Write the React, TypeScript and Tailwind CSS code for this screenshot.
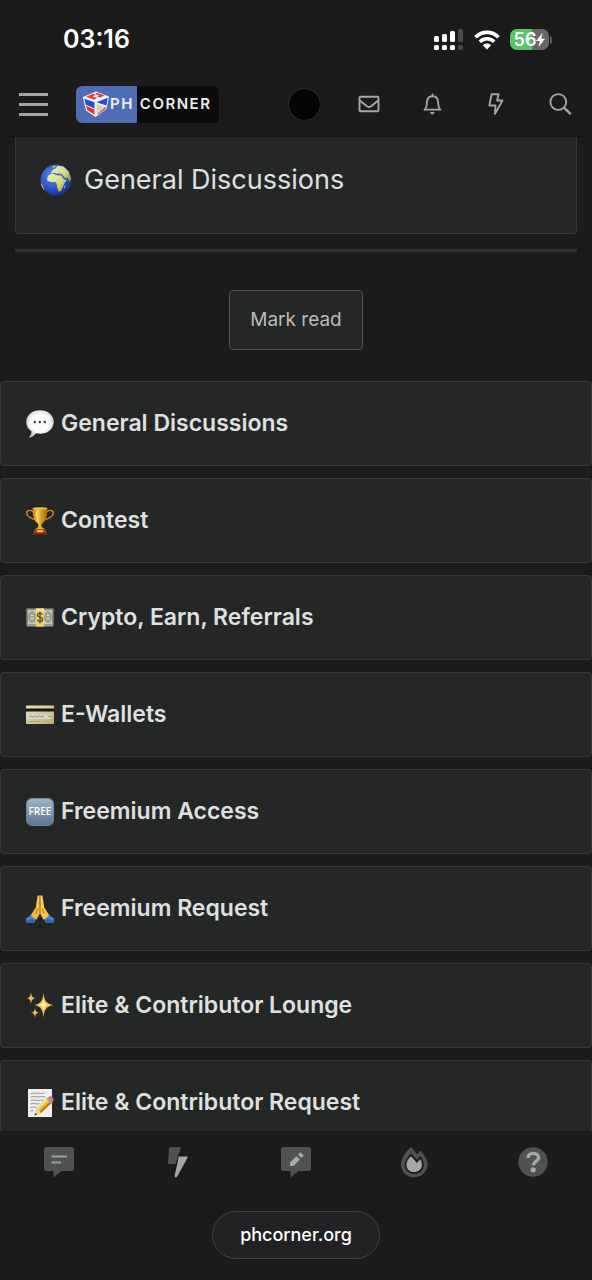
import type { ReactNode } from "react";

interface Entry {
  name: string;
  icon: ReactNode;
}

function GlobeIcon() {
  return (
    <svg viewBox="0 0 32 32" className="size-8" aria-hidden="true">
      <defs>
        <radialGradient id="ocean" cx="0.4" cy="0.35" r="0.65">
          <stop offset="0" stopColor="#5b8fe0" />
          <stop offset="0.6" stopColor="#2f5acb" />
          <stop offset="1" stopColor="#1d3187" />
        </radialGradient>
        <linearGradient id="land" x1="0" y1="0" x2="1" y2="1">
          <stop offset="0" stopColor="#eef2c4" />
          <stop offset="0.6" stopColor="#d3d584" />
          <stop offset="1" stopColor="#8b8a2c" />
        </linearGradient>
        <clipPath id="globe">
          <circle cx="16" cy="16" r="15.5" />
        </clipPath>
      </defs>
      <circle cx="16" cy="16" r="15.5" fill="url(#ocean)" />
      <g clipPath="url(#globe)" fill="url(#land)">
        <path d="M7.500 13c1-2.200 3.500-3.300 6.500-3.400l2 1.500 3 .4 2.500.1 2.300 4 2.800.4-2.500 3.800-1.200 3.200-2 4-2 .8-1.700-3.700-.2-3.700-1.500-2.400-4 .2L7.200 16.500z" />
        <path d="M11 9l1.500-3 3-1.500 2-2.700 6 .8 5 5 2.500 7.400-1.500 3-1.800-4.300-2.200.8-3-3.600-2.500.2-.6-1.800-2.600.8-1.600-1.200-1.600 1z" />
        <path d="M0 18.500l2.200 1.700.8 2.800 1.600 2.200L2 27l-3-5z" fill="#d9cc62" />
        <path d="M12 2.500l3-1 1 1-2.500 1.500z" fill="#a6cf6a" />
        <path d="M24.500 22l1-.8-.3 2.600-.9.6z" />
      </g>
      <path d="M13 9l3 1.200 3 .2 2-.4 1.500 1.300" fill="none" stroke="#37609f" strokeWidth="1" />
    </svg>
  );
}

function SpeechIcon() {
  return (
    <svg viewBox="0 0 28 28" className="size-7" aria-hidden="true">
      <defs>
        <radialGradient id="bubble" cx="0.5" cy="0.45" r="0.55">
          <stop offset="0.6" stopColor="#fcfcfc" />
          <stop offset="1" stopColor="#c3c5c5" />
        </radialGradient>
      </defs>
      <path
        d="M14 .3C6.300.3.300 5 .3 11.900c0 4 2 7.300 5.200 9.300.1 2.200-.9 4.600-2.700 6.500 3-.3 5.600-2.100 7.200-4.400 1.200.3 2.600.4 4 .4 7.700 0 13.700-4.900 13.700-11.800S21.700.3 14 .3z"
        fill="url(#bubble)"
      />
      <circle cx="8.800" cy="12" r="1.200" fill="#3a3a3a" />
      <circle cx="13.800" cy="12" r="1.200" fill="#3a3a3a" />
      <circle cx="18.800" cy="12" r="1.200" fill="#3a3a3a" />
    </svg>
  );
}

function TrophyIcon() {
  return (
    <svg viewBox="0 0 28 28" className="size-7" aria-hidden="true">
      <defs>
        <linearGradient id="gold" x1="0" x2="1" y1="0" y2="0">
          <stop offset="0" stopColor="#c47a10" />
          <stop offset="0.35" stopColor="#f6cf58" />
          <stop offset="0.6" stopColor="#d79a24" />
          <stop offset="1" stopColor="#a5620c" />
        </linearGradient>
      </defs>
      <path
        d="M8 5.500C5.500 2.500.7 2.700.7 6.200c0 3.300 4.300 5.200 9.300 6.800M20 5.500c2.500-3 7.300-2.800 7.300.7 0 3.300-4.300 5.200-9.300 6.800"
        fill="none"
        stroke="#c98f2c"
        strokeWidth="1.400"
      />
      <path d="M6.600 1.100h14.800c.2 7.800-1.600 13.300-5.600 15.700l-.4 4.700h-2.800l-.4-4.700C8.200 14.400 6.400 8.900 6.600 1.100z" fill="url(#gold)" />
      <ellipse cx="14" cy="1.400" rx="7.400" ry="1.200" fill="#eac25a" />
      <path d="M10.500 4.500c0 4 .8 7.500 2.300 9.800" fill="none" stroke="#fbe596" strokeWidth="1" />
      <path d="M9.500 22.300c1-1.700 2.500-2.200 4.500-2.200s3.500.5 4.500 2.200z" fill="#e2ac3d" />
      <path d="M8.500 22h11l1.500 5.800H7z" fill="#a9430f" />
      <path d="M8.200 26h11.600l.6 1.800H7.600z" fill="#6b2106" />
      <rect x="11" y="23" width="6" height="2.200" fill="#f3b860" />
    </svg>
  );
}

function MoneyIcon() {
  return (
    <svg viewBox="0 0 28 28" className="size-7" aria-hidden="true">
      <rect x="0.500" y="4.500" width="27" height="18" fill="#a3a590" />
      <rect x="1.700" y="5.800" width="24.600" height="15" fill="#c8c9b8" stroke="#7d806d" strokeWidth="0.800" />
      <ellipse cx="6" cy="13" rx="3.200" ry="5.200" fill="#a6a994" stroke="#73766a" strokeWidth="0.700" />
      <ellipse cx="22" cy="13" rx="3.200" ry="5.200" fill="#a6a994" stroke="#73766a" strokeWidth="0.700" />
      <path d="M4.500 11.500h3M4.500 14.500h3M20.500 11.500h3M20.500 14.500h3" stroke="#e2e3d6" strokeWidth="0.900" />
      <rect x="10" y="4.500" width="8" height="18" fill="#f3cf62" />
      <rect x="10" y="4.500" width="8" height="2.500" fill="#f7e6a6" />
      <path
        d="M16.500 10.600c-.4-1.100-1.200-1.500-2.500-1.500-1.500 0-2.500.7-2.500 2 0 2.900 5.100 1.300 5.100 4.400 0 1.400-1.100 2.100-2.600 2.100s-2.400-.6-2.700-1.900M14 7.700v11.500"
        fill="none"
        stroke="#50503a"
        strokeWidth="1.300"
      />
    </svg>
  );
}

function CardIcon() {
  return (
    <svg viewBox="0 0 28 28" className="size-7" aria-hidden="true">
      <defs>
        <linearGradient id="card" x1="0" x2="1" y1="0" y2="1">
          <stop offset="0" stopColor="#ebe4bf" />
          <stop offset="1" stopColor="#b9ae74" />
        </linearGradient>
      </defs>
      <rect y="4.500" width="28" height="18.500" rx="1" fill="url(#card)" />
      <rect y="7.500" width="28" height="3" fill="#16150f" />
      <rect x="2" y="13.500" width="23" height="4.500" fill="#d8d7c6" />
      <path d="M3 16l2-1 2 1 2-1 2 1.200 2-1.400 2 1.200 3-.7M22 15.500h3" fill="none" stroke="#76817f" strokeWidth="0.800" />
      <path d="M2 20.500h12" stroke="#9d935f" strokeWidth="0.600" />
    </svg>
  );
}

function FreeIcon() {
  return (
    <span className="flex size-7 items-center justify-center rounded-md border border-[#6f879f] bg-linear-to-b from-[#9db4cc] to-[#5f7892] font-['Open_Sans',sans-serif] text-[10px] font-semibold text-white">
      FREE
    </span>
  );
}

function PrayIcon() {
  return (
    <svg viewBox="0 0 28 28" className="size-7" aria-hidden="true">
      <path d="M0 23.500l5.500-4.200 5.300 3.800L8 27.800H0zM28 23.500l-5.500-4.200-5.300 3.800 2.800 4.700h8z" fill="#4a7fd6" />
      <path d="M0 25.500l7-1.500 2 2-1 1.800H0zM28 25.500l-7-1.500-2 2 1 1.800h8z" fill="#3462b5" />
      <path d="M13.900.8c-1-1-2.300-.5-2.500.8L9.800 12.500 5 19.800c1.400 2.500 3.200 4.100 5.600 4.700l3.300-6z" fill="#f3b83a" />
      <path d="M14.100.8c1-1 2.300-.5 2.500.8l1.600 10.900 4.800 7.300c-1.400 2.500-3.200 4.100-5.600 4.700l-3.300-6z" fill="#f7c94b" />
      <path d="M14 1.500v17M11.600 13.500l-1.500 5M16.400 13.500l1.500 5" fill="none" stroke="#a8661c" strokeWidth="0.900" />
      <path d="M12.500 3l-1.200 10M15.500 3l1.200 10" fill="none" stroke="#fde08a" strokeWidth="0.700" />
    </svg>
  );
}

function SparklesIcon() {
  return (
    <svg viewBox="0 0 28 28" className="size-7" aria-hidden="true">
      <path d="M17.500.8c.8 7.500 2.200 11 10.300 12.300-8.100 1.300-9.500 5-10.300 12.500-.8-7.500-2.200-11.200-9.300-12.500 7.100-1.300 8.500-4.800 9.300-12.300z" fill="#f3c451" />
      <path d="M17.500 7.300c.5 4 1.300 5 4.500 5.800-3.200.8-4 1.800-4.500 5.800-.5-4-1.300-5-4.500-5.800 3.200-.8 4-1.800 4.500-5.800z" fill="#fff0ae" />
      <path d="M5 .3c.5 3.600 1 5.200 4.300 5.900C6 6.900 5.500 8.500 5 12c-.5-3.500-1-5.100-4-5.800C4 5.500 4.500 3.900 5 .3zM9 15.800c.4 3 1 4.400 4.200 5-3.200.6-3.800 2-4.200 5-.4-3-1-4.400-4-5 3-.6 3.600-2 4-5z" fill="#e9bb5a" />
    </svg>
  );
}

function MemoIcon() {
  return (
    <svg viewBox="0 0 28 28" className="size-7" aria-hidden="true">
      <rect x="2" width="24" height="28" fill="#efefed" />
      <path
        d="M4.500 4.500l3-.5 2 .5 3-.5 2 .6 4-.6M4.500 8l4-.4 3 .4 4-.5 4 .5M4.500 11.500l3-.5 4 .5 4-.4 2 .4M4.500 15l3-.5 4 .5 2-.4M4.500 18.500l4-.4 2 .4M4.500 22l3-.5"
        fill="none"
        stroke="#8a8b8d"
        strokeWidth="0.900"
      />
      <path d="M8.500 26.500l2-7L21 9.300l4.700 4.700-11 10.300z" fill="#e7b52c" />
      <path d="M10.500 19.500L21 9.300l1.600 1.600-10.800 10.300z" fill="#f8dc6d" />
      <path d="M13.200 22.800L24.300 12.500l1.400 1.500-11 10.300z" fill="#bd7c17" />
      <path d="M8.500 26.500l2-7c1.800.6 3.600 2.200 4.200 4.800z" fill="#ecd2a4" />
      <path d="M8.500 26.500l.8-2.600 1.800 1.600z" fill="#3b3128" />
      <path d="M20.500 9.800l1.700-1.500 4.600 4.600-1.600 1.500z" fill="#9ba3a7" />
      <path d="M22.200 8.300c1.300-1.300 3.300-1.200 4.500.1 1.300 1.400 1.300 3.200-.1 4.600z" fill="#e06a74" />
    </svg>
  );
}

const forums: Entry[] = [
  { name: "General Discussions", icon: <SpeechIcon /> },
  { name: "Contest", icon: <TrophyIcon /> },
  { name: "Crypto, Earn, Referrals", icon: <MoneyIcon /> },
  { name: "E-Wallets", icon: <CardIcon /> },
  { name: "Freemium Access", icon: <FreeIcon /> },
  { name: "Freemium Request", icon: <PrayIcon /> },
  { name: "Elite & Contributor Lounge", icon: <SparklesIcon /> },
  { name: "Elite & Contributor Request", icon: <MemoIcon /> },
];

const headerActions: Entry[] = [
  {
    name: "Inbox",
    icon: (
      <svg viewBox="0 0 24 24" className="size-6" fill="none" stroke="currentColor" strokeWidth="1.900" strokeLinejoin="round">
        <rect x="3.500" y="4.700" width="19" height="14.600" rx="1" />
        <path d="M3.700 8.500l7.600 5.900c1.100.8 2.300.8 3.400 0l7.600-5.900" />
      </svg>
    ),
  },
  {
    name: "Alerts",
    icon: (
      <svg viewBox="0 0 24 24" className="size-6" fill="none" stroke="currentColor" strokeWidth="1.900" strokeLinejoin="round" strokeLinecap="round">
        <path d="M12.500 2.500v1.700M4.500 17.600c2.200-1.900 2.300-4.200 2.400-7.100.1-4 2.400-6.300 5.600-6.300s5.500 2.300 5.600 6.300c.1 2.900.2 5.200 2.400 7.100z" />
        <path d="M10.700 20.600h3.600l-1.800 1.300z" fill="currentColor" strokeWidth="1" />
      </svg>
    ),
  },
  {
    name: "What's new",
    icon: (
      <svg viewBox="0 0 24 24" className="size-6" fill="none" stroke="currentColor" strokeWidth="1.900" strokeLinejoin="round">
        <path d="M7.700 2.200h6.900L13.100 8.500h5.400L11 21.800l.5-8.300H5.300z" />
      </svg>
    ),
  },
  {
    name: "Search",
    icon: (
      <svg viewBox="0 0 24 24" className="size-6" fill="none" stroke="currentColor" strokeWidth="1.900">
        <circle cx="10.300" cy="10" r="7.900" />
        <path d="M16 15.700l6.700 6.500" strokeWidth="2.400" />
      </svg>
    ),
  },
];

const tabs: Entry[] = [
  {
    name: "Forums",
    icon: (
      <svg viewBox="0 0 32 32" className="size-8">
        <path d="M3.500 1h25A2.500 2.500 0 0 1 31 3.500v19a2.500 2.500 0 0 1-2.500 2.500H18.500l-8 6.400V25h-7A2.500 2.500 0 0 1 1 22.500v-19A2.500 2.500 0 0 1 3.500 1z" fill="#505252" />
        <path d="M8.500 10.500h15.500M8.500 16.500h9.500" stroke="#9c9fa0" strokeWidth="2" />
      </svg>
    ),
  },
  {
    name: "New posts",
    icon: (
      <svg viewBox="0 0 32 32" className="size-8">
        <path d="M8 1h11l-3 9.500-2.500 7.500H7c-.7 0-1-.4-.9-1L7 2z" fill="#505252" />
        <path d="M16.800 10.500h8c.8 0 1.100.6.700 1.300L15.200 30.500c-.8 1.300-3 1.200-2.600-.4z" fill="#a5a8a9" />
      </svg>
    ),
  },
  {
    name: "Post thread",
    icon: (
      <svg viewBox="0 0 32 32" className="size-8">
        <path d="M3.500 1h25A2.500 2.500 0 0 1 31 3.500v19a2.500 2.500 0 0 1-2.500 2.500H18.500l-8 6.400V25h-7A2.500 2.500 0 0 1 1 22.500v-19A2.500 2.500 0 0 1 3.500 1z" fill="#505252" />
        <path d="M10 16.500l6.500-6.500 3.500 3.500-6.500 6.500H10zM18 8.500l1.600-1.600c.5-.5 1-.5 1.500 0l2 2c.5.5.5 1 0 1.500L21.500 12z" fill="#a5a8a9" />
      </svg>
    ),
  },
  {
    name: "Trending",
    icon: (
      <svg viewBox="0 0 32 32" className="size-8">
        <path d="M13 1C9 5 3 11 3 18.500 3 25.800 8.600 31.300 16 31.300s13.500-5.500 13.500-12.800c0-4.500-3-10-7-14l-3.500 3.700C17.300 5.700 15.300 3.200 13 1z" fill="#505252" />
        <path d="M12.800 7.500C9.300 11.500 6.600 15 6.600 18.700c0 5.300 4 9.200 9.500 9.200s9.700-3.900 9.700-9.200c0-2.800-1.400-6-3.500-8.700l-3.500 3.800c-1.500-2.200-3.700-4.400-6-6.300z" fill="#1b1c1c" />
        <path d="M12.700 10.300C10 13.400 8.400 16 8.400 18.700c0 4.400 3.300 7.400 7.700 7.400s7.800-3 7.800-7.400c0-1.900-.5-3.700-1.600-5.500L18.500 17c-1.600-2.600-3.600-4.800-5.800-6.700z" fill="#a5a8a9" />
      </svg>
    ),
  },
  {
    name: "Help",
    icon: (
      <svg viewBox="0 0 32 32" className="size-8">
        <circle cx="16" cy="16" r="14.700" fill="#505252" />
        <path d="M11 12c.2-3.200 2.300-4.600 5.200-4.600 3 0 5.400 1.600 5.400 4.400 0 3.800-5.200 3.500-5.200 7.400" fill="none" stroke="#a5a8a9" strokeWidth="3.400" />
        <circle cx="16.200" cy="23.800" r="2.600" fill="#a5a8a9" />
      </svg>
    ),
  },
];

function StatusBar() {
  return (
    <div className="flex h-[72px] shrink-0 items-center justify-between border-b border-[#191919] pt-2 pr-10 pl-[63px]">
      <span className="text-[25px] font-semibold text-white">03:16</span>
      <div className="flex items-center gap-2.5">
        <svg viewBox="0 0 30 22" className="h-[22px] w-[30px]" fill="#fff" aria-hidden="true">
          <rect x="0" y="7" width="5" height="6" rx="1.500" />
          <rect x="8" y="5" width="5" height="8" rx="1.500" />
          <rect x="16" y="2" width="5" height="11" rx="1.500" />
          <rect x="0" y="16" width="5" height="5" rx="1.500" />
          <rect x="8" y="16" width="5" height="5" rx="1.500" />
          <rect x="16" y="16" width="5" height="5" rx="1.500" />
          <g fill="#4a4a4a">
            <rect x="24" y="0" width="5" height="13" rx="1.500" />
            <rect x="24" y="16" width="5" height="5" rx="1.500" />
          </g>
        </svg>
        <svg viewBox="0 0 26 20" className="h-5 w-[26px]" aria-hidden="true">
          <path d="M1.500 7.200c6.500-6.400 16.500-6.400 23 0M5.800 11.700c4.200-4 10.200-4 14.400 0" fill="none" stroke="#fff" strokeWidth="3.600" />
          <path d="M13 19.500l-4.200-4.300c2.500-2.200 5.900-2.200 8.400 0z" fill="#fff" />
        </svg>
        <div className="flex items-center gap-px">
          <div className="flex h-[21px] w-[39px] items-center justify-center rounded-[7px] bg-linear-to-r from-[#5cc466] from-56% to-[#666868] to-56% text-lg font-semibold text-white">
            56
            <svg viewBox="0 0 9 14" className="h-3.5 w-[9px]" fill="#fff" aria-hidden="true">
              <path d="M6.500 0L0 8h3.800L2.500 14 9 5.800H5.200z" />
            </svg>
          </div>
          <div className="h-2 w-0.5 rounded-r-full bg-[#5a5a5a]" />
        </div>
      </div>
    </div>
  );
}

function Logo() {
  return (
    <a href="#" className="flex h-[37px] overflow-hidden rounded-md text-[15px] font-semibold tracking-widest text-[#ececec]">
      <span className="flex items-center bg-[#4f6db5] pr-[3px] pl-1.5">
        <svg viewBox="0 0 28 28" className="size-7" aria-hidden="true">
          {/* cube silhouette */}
          <path d="M14 1.500L27 6.500 24.500 19 13.500 27 4 20.500.800 7z" fill="#f1f2f6" />
          {/* top face */}
          <path d="M4 6.800l7-3 3 1-3.500 1.700 4.500 1-3 2.200z" fill="#e0483d" />
          <path d="M15 2.700l7.500 2.800-4.500 2-3-1 2.500-1-4.500-1.500z" fill="#d83b3b" />
          {/* left face */}
          <path d="M2.300 8.800l10.200 3.400v6.300L3.800 14.700z" fill="#2450c4" />
          <path d="M4 15.800l8.500 3.700v5.300L5.200 19.900z" fill="#d8393d" />
          {/* right face */}
          <path d="M14.500 12.300L25.800 7.800l-1.300 7.700z" fill="#2450c4" />
          <path d="M14.500 13.500l7.800 4-7.800 6z" fill="#c9dcc4" />
          <path d="M24.200 16.600l-.6 2.100-8.100 6v-1.200z" fill="#d8393d" />
          <circle cx="17" cy="18" r="1.300" fill="#e0d66c" />
        </svg>
        PH
      </span>
      <span className="flex items-center bg-[#0b0b0b] pr-2 pl-[3px]">CORNER</span>
    </a>
  );
}

function Header() {
  return (
    <header className="flex h-[65px] shrink-0 items-center border-b border-[#171717] pl-[19px]">
      <button type="button" aria-label="Menu" className="mr-7 flex flex-col gap-[7px]">
        <span className="h-[3px] w-[29px] bg-[#a4a5a6]" />
        <span className="h-[3px] w-[29px] bg-[#a4a5a6]" />
        <span className="h-[3px] w-[29px] bg-[#a4a5a6]" />
      </button>
      <Logo />
      <nav className="ml-auto flex text-[#a4a5a6]">
        <a href="#" aria-label="Account" className="flex w-16 items-center justify-center">
          <span className="size-[33px] rounded-full border border-[#2b2c2c] bg-[#040404]" />
        </a>
        {headerActions.map((action) => (
          <a key={action.name} href="#" aria-label={action.name} className="flex w-16 items-center justify-center">
            {action.icon}
          </a>
        ))}
      </nav>
    </header>
  );
}

export default function App() {
  return (
    <div className="flex h-screen flex-col bg-[#1b1b1b] font-['Inter',sans-serif] text-[#dfe0e0]">
      <StatusBar />
      <Header />

      <main className="min-h-0 flex-1 overflow-y-auto [scrollbar-width:none]">
        {/* Category title */}
        <div className="mx-[15px] rounded-b border border-t-0 border-[#353838] bg-[#252727] px-6 pt-[25px] pb-[35px]">
          <h1 className="flex items-center gap-3 text-[27px] leading-9">
            <GlobeIcon />
            General Discussions
          </h1>
        </div>
        <hr className="mx-[15px] mt-[15px] border-t-[3px] border-[#303232]" />

        <div className="flex justify-center pt-[38px] pb-[31px]">
          <button type="button" className="h-[60px] rounded border border-[#505252] bg-[#252727] px-5 text-[19px] text-[#b9bbbb]">
            Mark read
          </button>
        </div>

        {/* Forum list */}
        <ul className="flex flex-col gap-3">
          {forums.map((forum) => (
            <li key={forum.name}>
              <a
                href="#"
                className="flex h-[85px] items-center gap-[7px] rounded border border-[#353838] bg-[#252727] px-[25px] text-[23px] font-semibold"
              >
                {forum.icon}
                {forum.name}
              </a>
            </li>
          ))}
        </ul>
      </main>

      <footer className="shrink-0 pb-[21px]">
        <nav className="grid grid-cols-5 pt-[15px] pb-[33px]">
          {tabs.map((tab) => (
            <a key={tab.name} href="#" aria-label={tab.name} className="flex justify-center">
              {tab.icon}
            </a>
          ))}
        </nav>
        <button
          type="button"
          className="mx-auto block h-12 rounded-full border border-[#414144] bg-[#222225] px-[27px] text-lg font-medium text-white"
        >
          phcorner.org
        </button>
      </footer>
    </div>
  );
}
